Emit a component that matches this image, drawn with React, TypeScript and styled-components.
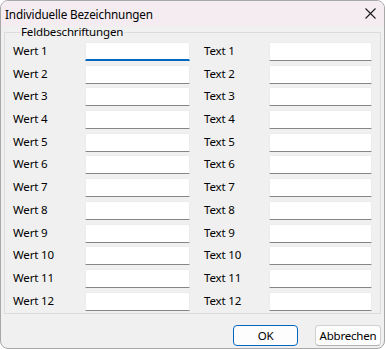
import styled, { createGlobalStyle } from "styled-components";

const GlobalStyle = createGlobalStyle`
  html, body {
    margin: 0;
    padding: 0;
    background: #ffffff;
  }
  * {
    box-sizing: border-box;
  }
`;

const Window = styled.div`
  width: 385px;
  height: 349px;
  display: flex;
  flex-direction: column;
  background: #f0f0f0;
  border: 1px solid #a8a8a8;
  border-radius: 8px;
  overflow: hidden;
  font-family: "Noto Sans", "Liberation Sans", sans-serif;
  font-size: 11.5px;
  letter-spacing: -0.15px;
  color: #000;
`;

const TitleBar = styled.div`
  height: 25px;
  flex: none;
  display: flex;
  align-items: center;
  justify-content: space-between;
  padding: 0 8px 0 4px;
  background: #f4ecf1;
`;

const Title = styled.span`
  font-size: 11.7px;
  line-height: 16px;
`;

const CloseIcon = styled.svg`
  width: 11px;
  height: 11px;
`;

const GroupBox = styled.fieldset`
  margin: 0 0 0 3px;
  width: 377px;
  border: 1px solid #dcdcdc;
  padding: 4px 8px 2px 8px;
`;

const Legend = styled.legend`
  padding: 0 1px;
  margin-left: 7px;
  line-height: 12px;
`;

const Grid = styled.div`
  display: grid;
  grid-template-columns: 72px 105px 79px 103px;
  grid-auto-rows: 19px;
  row-gap: 3.7px;

  & > :nth-child(4n + 3) {
    margin-left: 14px;
  }
`;

const Label = styled.span`
  display: flex;
  align-items: center;
  padding-bottom: 2px;
  white-space: nowrap;
`;

const Field = styled.div<{ $focused?: boolean }>`
  background: #ffffff;
  border: 1px solid #ececec;
  border-bottom: ${(p) => (p.$focused ? "2px solid #0067c0" : "1px solid #868686")};
  border-radius: 2px 2px 0 0;
`;

const Footer = styled.div`
  display: flex;
  justify-content: flex-end;
  gap: 17px;
  padding: 11px 3px 0 0;
`;

const Button = styled.button<{ $primary?: boolean }>`
  height: 21px;
  width: ${(p) => (p.$primary ? "65px" : "66px")};
  padding: 0;
  font-family: inherit;
  font-size: 11.5px;
  letter-spacing: -0.2px;
  color: #000;
  background: #fdfdfd;
  border: 1px solid ${(p) => (p.$primary ? "#0067c0" : "#d0d0d0")};
  border-bottom-color: ${(p) => (p.$primary ? "#0067c0" : "#b0b0b0")};
  border-radius: 4px;
`;

const rows = Array.from({ length: 12 }, (_, i) => i + 1);

export default function App() {
  return (
    <>
      <GlobalStyle />
      <Window>
        <TitleBar>
          <Title>Individuelle Bezeichnungen</Title>
          <CloseIcon viewBox="0 0 11 11">
            <path d="M0.5 0.5 L10.5 10.5 M10.5 0.5 L0.5 10.5" stroke="#1a1a1a" strokeWidth="1.1" />
          </CloseIcon>
        </TitleBar>
        <GroupBox>
          <Legend>Feldbeschriftungen</Legend>
          <Grid>
            {rows.map((n) => [
              <Label key={`wl${n}`}>Wert {n}</Label>,
              <Field key={`wf${n}`} $focused={n === 1} />,
              <Label key={`tl${n}`}>Text {n}</Label>,
              <Field key={`tf${n}`} />,
            ])}
          </Grid>
        </GroupBox>
        <Footer>
          <Button $primary>OK</Button>
          <Button>Abbrechen</Button>
        </Footer>
      </Window>
    </>
  );
}
